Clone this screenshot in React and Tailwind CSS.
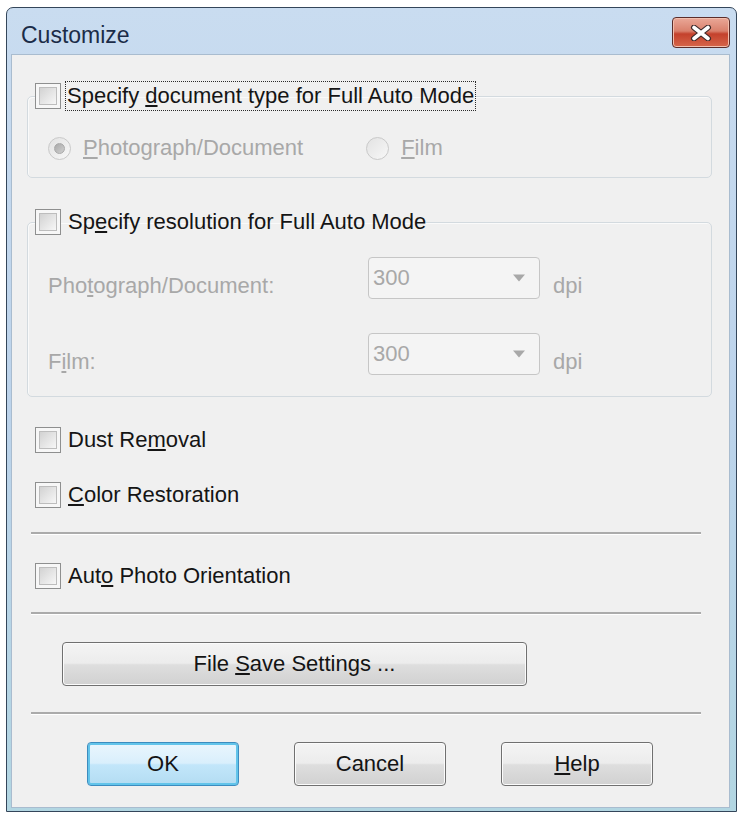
import React from "react";

function Box() {
  return (
    <span className="flex h-[26px] w-[26px] shrink-0 items-center justify-center border border-[#8e8f8f] bg-[#f7f7f7]">
      <span className="h-[18px] w-[18px] border border-[#bdbdbd] bg-gradient-to-br from-[#d2d2d2] to-[#f7f7f7]" />
    </span>
  );
}

function Radio({ checked }) {
  return (
    <span className="flex h-[23px] w-[23px] shrink-0 items-center justify-center rounded-full border border-[#c9c9c9] bg-gradient-to-br from-[#e2e2e2] to-[#f8f8f8]">
      {checked ? (
        <span className="h-[11px] w-[11px] rounded-full border border-[#a9a9a9] bg-gradient-to-br from-[#a9a9a9] to-[#d0d0d0]" />
      ) : null}
    </span>
  );
}

function Combo() {
  return (
    <div className="flex h-[42px] w-[172px] shrink-0 items-center justify-between rounded-[4px] border border-[#c6c6c6] bg-[#f4f4f4] pl-[4px] pr-[14px]">
      <span className="text-[22px] leading-[26px] text-[#a8a8a8]">300</span>
      <svg width="12" height="8" viewBox="0 0 12 8">
        <path d="M0 0.5h12L6 7.5z" fill="#a8a8a8" />
      </svg>
    </div>
  );
}

function Button({ children, className }) {
  return (
    <button
      className={
        "flex h-[44px] items-center justify-center rounded-[4px] border border-[#707070] bg-[linear-gradient(#f4f4f4_0%,#ececec_48%,#dedede_52%,#d1d1d1_100%)] text-[22px] leading-[26px] text-[#141414] shadow-[inset_0_0_0_1px_#fbfbfb] " +
        className
      }
    >
      {children}
    </button>
  );
}

function Separator({ className }) {
  return (
    <div
      className={
        "ml-[19px] h-[3px] w-[670px] border-b border-b-white bg-[#ababab] " +
        className
      }
    />
  );
}

export default function App() {
  return (
    <div className="h-[815px] w-[740px] bg-white pl-[6px] pt-[7px] font-['Liberation_Sans',Arial,sans-serif]">
      <div className="flex h-[805px] w-[731px] flex-col rounded-t-[7px] border border-[#34465a] bg-gradient-to-b from-[#c9dcf0] via-[#bcd3eb] to-[#b2d6e2]">
        {/* Title bar */}
        <div className="flex h-[46px] shrink-0 items-start justify-between pl-[14px] pr-[6px]">
          <span className="mt-[14px] text-[23px] leading-[27px] text-[#1b2c48]">
            Customize
          </span>
          <div className="mt-[9px] flex h-[31px] w-[58px] items-center justify-center rounded-[4px] border border-[#5b2d2a] bg-[linear-gradient(#eaa898_0%,#d9806c_45%,#c4412c_55%,#d6664a_100%)] shadow-[inset_0_0_0_1px_#f2bfae]">
            <svg width="22" height="16" viewBox="0 0 22 16">
              <path
                d="M4 2.5L18 13.5M18 2.5L4 13.5"
                stroke="#3d2a2a"
                strokeWidth="6"
                strokeLinecap="round"
              />
              <path
                d="M4 2.5L18 13.5M18 2.5L4 13.5"
                stroke="#ffffff"
                strokeWidth="3.6"
                strokeLinecap="round"
              />
            </svg>
          </div>
        </div>

        {/* Content */}
        <div className="mb-[3px] ml-[4px] mr-[6px] flex flex-1 flex-col border border-[#a9bccf] bg-[#f0f0f0] text-[#151515]">
          {/* Group 1 */}
          <fieldset className="ml-[15px] mt-[25px] w-[685px] rounded-[5px] border border-[#d3dadf] pb-[16px] pl-[7px] shadow-[inset_1px_1px_0_#fafafa]">
            <legend className="flex h-[32px] items-center">
              <Box />
              <span className="ml-[4px] border border-dotted border-[#2a2a2a] px-[1px] text-[22px] leading-[28px]">
                Specify <u>d</u>ocument type for Full Auto Mode
              </span>
            </legend>
            <div className="ml-[13px] mt-[23px] flex h-[26px] items-center text-[#a8a8a8]">
              <Radio checked />
              <span className="ml-[12px] text-[22px] leading-[26px]">
                <u>P</u>hotograph/Document
              </span>
              <span className="ml-[63px]">
                <Radio />
              </span>
              <span className="ml-[12px] text-[22px] leading-[26px]">
                <u>F</u>ilm
              </span>
            </div>
          </fieldset>

          {/* Group 2 */}
          <fieldset className="ml-[15px] mt-[28px] w-[685px] rounded-[5px] border border-[#d3dadf] pb-[21px] pl-[7px] shadow-[inset_1px_1px_0_#fafafa]">
            <legend className="flex h-[32px] items-center">
              <Box />
              <span className="ml-[7px] text-[22px] leading-[28px]">
                Sp<u>e</u>cify resolution for Full Auto Mode
              </span>
            </legend>
            <div className="ml-[13px] mt-[19px] flex items-start text-[#a8a8a8]">
              <span className="mt-[16px] w-[320px] text-[22px] leading-[26px]">
                Pho<u>t</u>ograph/Document:
              </span>
              <Combo />
              <span className="ml-[13px] mt-[16px] text-[22px] leading-[26px]">
                dpi
              </span>
            </div>
            <div className="ml-[13px] mt-[34px] flex items-start text-[#a8a8a8]">
              <span className="mt-[16px] w-[320px] text-[22px] leading-[26px]">
                F<u>i</u>lm:
              </span>
              <Combo />
              <span className="ml-[13px] mt-[16px] text-[22px] leading-[26px]">
                dpi
              </span>
            </div>
          </fieldset>

          {/* Checkbox rows */}
          <div className="ml-[23px] mt-[27px] flex h-[32px] items-center gap-[7px]">
            <Box />
            <span className="text-[22px] leading-[26px]">
              Dust Re<u>m</u>oval
            </span>
          </div>
          <div className="ml-[23px] mt-[23px] flex h-[32px] items-center gap-[7px]">
            <Box />
            <span className="text-[22px] leading-[26px]">
              <u>C</u>olor Restoration
            </span>
          </div>

          <Separator className="mt-[21px]" />

          <div className="ml-[23px] mt-[25px] flex h-[32px] items-center gap-[7px]">
            <Box />
            <span className="text-[22px] leading-[26px]">
              Aut<u>o</u> Photo Orientation
            </span>
          </div>

          <Separator className="mt-[20px]" />

          <Button className="ml-[50px] mt-[27px] w-[465px]">
            <span>
              File <u>S</u>ave Settings ...
            </span>
          </Button>

          <Separator className="mt-[26px]" />

          <div className="ml-[75px] mt-[27px] flex gap-[55px]">
            <button className="flex h-[44px] w-[152px] items-center justify-center rounded-[4px] border border-[#3c8cbf] bg-[linear-gradient(#eaf6fd_0%,#d9effc_48%,#c2e6fa_52%,#b3dcf2_100%)] text-[22px] leading-[26px] text-[#141414] shadow-[inset_0_0_0_2px_#62c4ea]">
              OK
            </button>
            <Button className="w-[152px]">Cancel</Button>
            <Button className="w-[152px]">
              <span>
                <u>H</u>elp
              </span>
            </Button>
          </div>
        </div>
      </div>
    </div>
  );
}
